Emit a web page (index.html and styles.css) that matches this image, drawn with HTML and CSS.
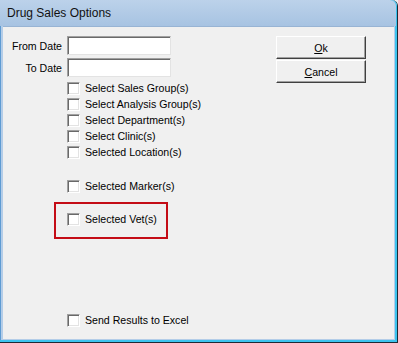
FILE: index.html
```html
<!DOCTYPE html>
<html lang="en">
<head>
    <meta charset="UTF-8">
    <title>Drug Sales Options</title>
    <link rel="stylesheet" href="styles.css">
</head>
<body>
    <div class="window">
        <div class="title-bar">Drug Sales Options</div>

        <div class="client">
            <!-- Параметры отчёта -->
            <div class="options">
                <div class="date-row">
                    <label class="date-label" for="from-date">From Date</label>
                    <input class="date-input" type="text" id="from-date">
                </div>
                <div class="date-row">
                    <label class="date-label" for="to-date">To Date</label>
                    <input class="date-input" type="text" id="to-date">
                </div>

                <div class="checks">
                    <div class="check-row"><span class="check-box"></span>Select Sales Group(s)</div>
                    <div class="check-row"><span class="check-box"></span>Select Analysis Group(s)</div>
                    <div class="check-row"><span class="check-box"></span>Select Department(s)</div>
                    <div class="check-row"><span class="check-box"></span>Select Clinic(s)</div>
                    <div class="check-row"><span class="check-box"></span>Selected Location(s)</div>

                    <div class="check-row marker-row"><span class="check-box"></span>Selected Marker(s)</div>

                    <div class="highlight">
                        <div class="check-row"><span class="check-box"></span>Selected Vet(s)</div>
                    </div>

                    <div class="check-row excel-row"><span class="check-box"></span>Send Results to Excel</div>
                </div>
            </div>

            <!-- Кнопки -->
            <div class="buttons">
                <button class="win-button" type="button"><u>O</u>k</button>
                <button class="win-button" type="button"><u>C</u>ancel</button>
            </div>
        </div>
    </div>
</body>
</html>
```

FILE: styles.css
```css
/* Общие стили */
body {
    margin: 0;
    padding: 0;
    background-color: #f0f0f0;
    font-family: 'Liberation Sans', Arial, sans-serif;
    font-size: 10.6px;
    color: #000;
}

.window {
    width: 398px;
    height: 343px;
    box-sizing: border-box;
    display: flex;
    flex-direction: column;
    background-color: #b4cde8;
    border-right: 1px solid #1e2b36;
    border-bottom: 1px solid #1e2b36;
    border-top-right-radius: 6px;
    box-shadow: inset -2px -2px 0 #3cc3ee, inset 1px 0 0 #5e9bd3;
    padding: 0 3px 3px 3px;
}

.title-bar {
    height: 26px;
    line-height: 26px;
    margin: 0 -3px 0 -3px;
    padding-left: 7px;
    font-size: 12px;
    color: #111;
    background: linear-gradient(#bcd2ea, #a7c3e2);
    border-top-right-radius: 6px;
    box-shadow: inset -1px 0 0 #3cc3ee;
}

.client {
    flex: 1;
    display: flex;
    justify-content: space-between;
    background-color: #f0f0f0;
    border-top: 1px solid #98b4d4;
    padding: 9px 28px 0 1px;
}

.options {
    display: flex;
    flex-direction: column;
}

.date-row {
    display: flex;
    align-items: center;
    margin-bottom: 3px;
}

.date-label {
    width: 58px;
    margin-right: 5px;
    text-align: right;
}

.date-input {
    width: 104px;
    height: 19px;
    box-sizing: border-box;
    margin: 0;
    padding: 0;
    background-color: #fff;
    border: 1px solid;
    border-color: #a0a0a0 #e3e3e3 #e3e3e3 #a0a0a0;
    box-shadow: inset 1px 1px 0 #696969;
}

.checks {
    display: flex;
    flex-direction: column;
    margin-left: 63px;
}

.check-row {
    display: flex;
    align-items: center;
    height: 16px;
    white-space: nowrap;
}

.check-box {
    width: 13px;
    height: 13px;
    box-sizing: border-box;
    margin-right: 5px;
    background-color: #fff;
    border: 1px solid;
    border-color: #a0a0a0 #fff #fff #a0a0a0;
    box-shadow: inset 1px 1px 0 #696969, inset -1px -1px 0 #e3e3e3;
}

.marker-row {
    margin-top: 18px;
}

.highlight {
    width: 114px;
    height: 37px;
    box-sizing: border-box;
    margin: 8px 0 0 -13px;
    padding: 7px 0 0 11px;
    border: 2px solid #c40c16;
}

.excel-row {
    margin-top: 73px;
}

.buttons {
    display: flex;
    flex-direction: column;
    gap: 1px;
}

.win-button {
    width: 90px;
    height: 23px;
    margin: 0;
    padding: 0;
    font-family: inherit;
    font-size: 10.6px;
    color: #000;
    background-color: #f0f0f0;
    border: 1px solid;
    border-color: #fff #404040 #404040 #fff;
    box-shadow: inset -1px -1px 0 #a0a0a0;
}
```
